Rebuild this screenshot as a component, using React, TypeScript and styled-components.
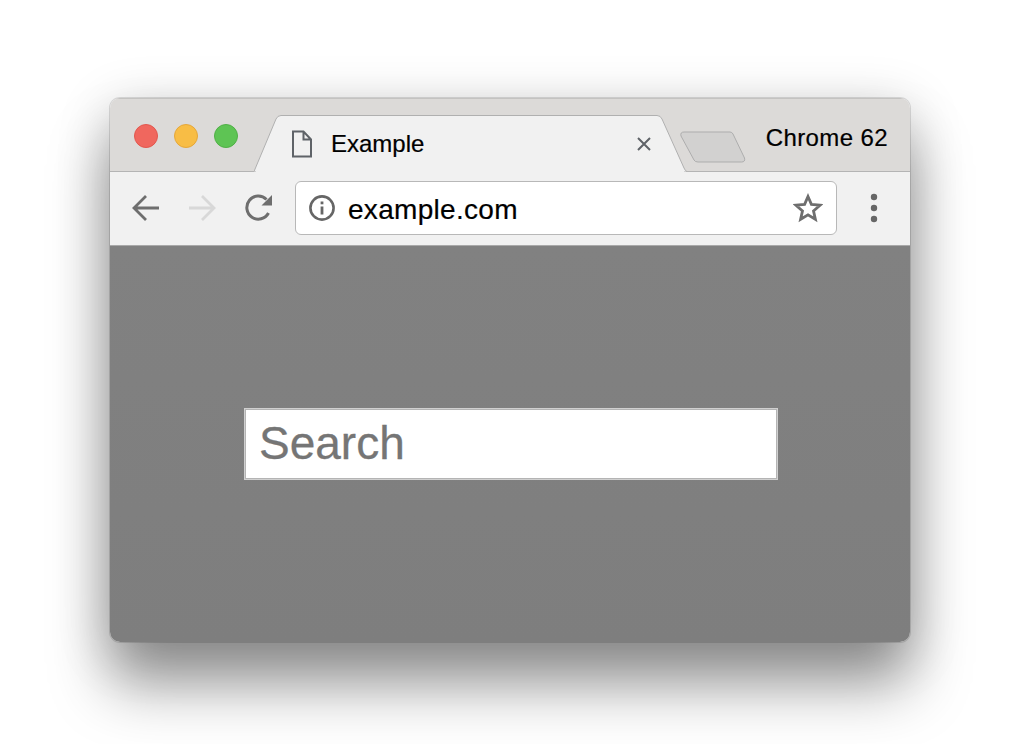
import React from "react";
import styled, { createGlobalStyle } from "styled-components";

const Global = createGlobalStyle`
  html, body { margin: 0; padding: 0; background: #fff; overflow: hidden; }
  * { box-sizing: border-box; }
`;

const Page = styled.div`
  width: 1016px;
  height: 744px;
  padding: 98px 106px 102px 110px;
  font-family: "Liberation Sans", Arial, sans-serif;
  color: #000;
`;

const Window = styled.div`
  width: 800px;
  height: 544px;
  display: flex;
  flex-direction: column;
  border-radius: 10px;
  overflow: hidden;
  box-shadow: 0 0 0 1px rgba(0, 0, 0, 0.12);
`;

const WindowShadow = styled.div`
  border-radius: 10px;
  box-shadow: 0 44px 60px rgba(0, 0, 0, 0.38), 0 10px 54px rgba(0, 0, 0, 0.2);
`;

const TabBar = styled.div`
  height: 74px;
  flex: none;
  display: flex;
  align-items: flex-start;
  background: #dcdad8;
  border-top: 1px solid #c4c3c1;
  border-bottom: 1px solid #b4b4b4;
  padding: 25px 22px 0 24px;
`;

const Lights = styled.div`
  display: flex;
  gap: 16px;
`;

const Light = styled.span<{ $fill: string; $edge: string }>`
  width: 24px;
  height: 24px;
  border-radius: 50%;
  background: ${(p) => p.$fill};
  border: 1px solid ${(p) => p.$edge};
`;

const Tab = styled.div`
  position: relative;
  width: 433px;
  height: 57px;
  margin: -9px 0 0 16px;
  display: flex;
  align-items: center;
  padding: 0 35px 0 37px;
`;

const TabShape = styled.svg`
  position: absolute;
  left: 0;
  top: 0;
  width: 433px;
  height: 57px;
`;

const TabIcon = styled.svg`
  position: relative;
  width: 22px;
  height: 28px;
  flex: none;
`;

const TabTitle = styled.span`
  position: relative;
  margin-left: 18px;
  font-size: 24px;
  -webkit-text-stroke: 0.2px #000;
  flex: 1;
`;

const CloseIcon = styled.svg`
  position: relative;
  width: 16px;
  height: 16px;
  flex: none;
`;

const NewTab = styled.svg`
  width: 66px;
  height: 32px;
  flex: none;
  margin: 7px 0 0 -7px;
`;

const ChannelLabel = styled.span`
  margin-left: auto;
  font-size: 24px;
  letter-spacing: 0.4px;
  line-height: 28px;
  -webkit-text-stroke: 0.2px #000;
`;

const Toolbar = styled.div`
  height: 74px;
  flex: none;
  display: flex;
  align-items: center;
  background: #f1f1f1;
  border-bottom: 1px solid #a9a9a9;
  padding: 0 0 1px 22px;
`;

const NavIcon = styled.svg<{ $after?: number }>`
  width: 28px;
  height: 28px;
  flex: none;
  margin-right: ${(p) => p.$after ?? 28}px;
`;

const Omnibox = styled.div`
  width: 542px;
  height: 54px;
  display: flex;
  align-items: center;
  margin-left: -6px;
  padding: 0 13px 0 12px;
  background: #fff;
  border: 1px solid #b8b8b8;
  border-radius: 6px;
`;

const InfoIcon = styled.svg`
  width: 28px;
  height: 28px;
  flex: none;
`;

const Url = styled.span`
  margin: 3px 0 0 12px;
  font-size: 28px;
  letter-spacing: 0.3px;
  -webkit-text-stroke: 0.2px #000;
  flex: 1;
`;

const StarIcon = styled.svg`
  width: 30px;
  height: 30px;
  flex: none;
`;

const MenuIcon = styled.svg`
  width: 8px;
  height: 30px;
  flex: none;
  margin-left: 33px;
`;

const Content = styled.div`
  flex: 1;
  background: linear-gradient(#818181, #7e7e7e);
  padding: 162px 0 0 134px;
`;

const SearchInput = styled.input`
  display: block;
  width: 534px;
  height: 72px;
  padding: 0 14px 3px;
  border: 1px solid #d0d0d0;
  outline: 1px solid #b4b4b4;
  outline-offset: -2px;
  background: #fff;
  font-family: "Liberation Sans", Arial, sans-serif;
  font-size: 46px;
  color: #757575;
  -webkit-text-stroke: 0.3px #757575;
  &::placeholder { color: #757575; opacity: 1; }
`;

export default function App() {
  return (
    <Page>
      <Global />
      <WindowShadow>
        <Window>
          <TabBar>
            <Lights>
              <Light $fill="#f0675e" $edge="#e2574e" />
              <Light $fill="#f8bd45" $edge="#e5a73a" />
              <Light $fill="#5ec454" $edge="#50b046" />
            </Lights>
            <Tab>
              <TabShape viewBox="0 0 433 57">
                <path
                  d="M0 56.5 L22 4 Q23.5 0.5 27 0.5 L403 0.5 Q406.5 0.5 408 4 L430 53 Q431.5 56.5 433 56.5"
                  fill="#f1f1f1"
                  stroke="#b0b0b0"
                  strokeWidth="1"
                />
                <rect x="2" y="55.5" width="428" height="1.5" fill="#f1f1f1" />
              </TabShape>
              <TabIcon viewBox="0 0 22 28">
                <path
                  d="M2 1.5 H12.5 L20 9.5 V26.5 H2 Z M12.5 1.5 V9.5 H20"
                  fill="none"
                  stroke="#5f6368"
                  strokeWidth="2"
                />
              </TabIcon>
              <TabTitle>Example</TabTitle>
              <CloseIcon viewBox="0 0 16 16">
                <path d="M2 2 L14 14 M14 2 L2 14" stroke="#5f6368" strokeWidth="2" />
              </CloseIcon>
            </Tab>
            <NewTab viewBox="0 0 66 32">
              <path
                d="M4 1 H50 Q52 1 53 3 L64.5 27 Q65.5 31 61.5 31 H18 Q15 31 14 29 L1 5 Q0 1 4 1 Z"
                fill="#d2d1d0"
                stroke="#adadad"
                strokeWidth="1"
              />
            </NewTab>
            <ChannelLabel>Chrome 62</ChannelLabel>
          </TabBar>
          <Toolbar>
            <NavIcon viewBox="0 0 28 28">
              <path d="M27 14 H3 M14 2 L2 14 L14 26" fill="none" stroke="#6e6e6e" strokeWidth="2.8" />
            </NavIcon>
            <NavIcon viewBox="0 0 28 28" $after={29}>
              <path d="M1 14 H25 M14 2 L26 14 L14 26" fill="none" stroke="#d8d8d8" strokeWidth="2.8" />
            </NavIcon>
            <NavIcon viewBox="0 0 28 28">
              <path d="M23.5 19 A11.5 11.5 0 1 1 21.5 5.5" fill="none" stroke="#6e6e6e" strokeWidth="3" />
              <path d="M27 1 V11.5 H16.5 Z" fill="#6e6e6e" />
            </NavIcon>
            <Omnibox>
              <InfoIcon viewBox="0 0 28 28">
                <circle cx="14" cy="14" r="11.6" fill="none" stroke="#666" strokeWidth="2.6" />
                <rect x="12.6" y="12.5" width="2.8" height="8" fill="#666" />
                <rect x="12.6" y="7.5" width="2.8" height="2.8" fill="#666" />
              </InfoIcon>
              <Url>example.com</Url>
              <StarIcon viewBox="0 0 30 30">
                <path
                  d="M15 3.5 L18.4 11.4 L27 12.2 L20.5 17.9 L22.4 26.3 L15 21.9 L7.6 26.3 L9.5 17.9 L3 12.2 L11.6 11.4 Z"
                  fill="none"
                  stroke="#6e6e6e"
                  strokeWidth="2.8"
                />
              </StarIcon>
            </Omnibox>
            <MenuIcon viewBox="0 0 8 30">
              <circle cx="4" cy="4" r="3.2" fill="#666" />
              <circle cx="4" cy="15" r="3.2" fill="#666" />
              <circle cx="4" cy="26" r="3.2" fill="#666" />
            </MenuIcon>
          </Toolbar>
          <Content>
            <SearchInput placeholder="Search" readOnly />
          </Content>
        </Window>
      </WindowShadow>
    </Page>
  );
}
